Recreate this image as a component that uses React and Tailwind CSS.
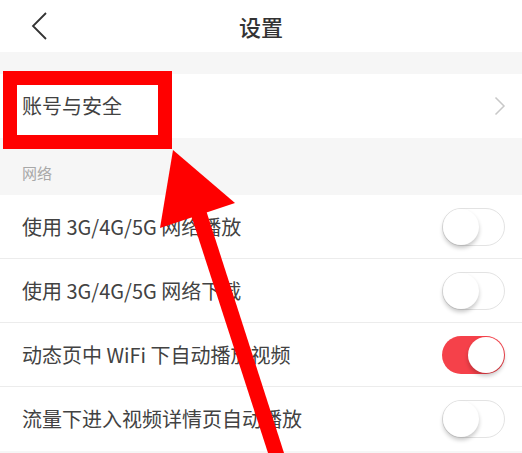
const font = { fontFamily: '"Noto Sans CJK SC", "Noto Sans", sans-serif' };

const Toggle = ({ on }) => {
  return (
    <div
      className={
        on
          ? "w-[63px] h-[38px] rounded-full bg-[#f5414a] flex items-center justify-end p-[1px]"
          : "w-[63px] h-[38px] rounded-full bg-white border border-[#e3e3e3] flex items-center justify-start"
      }
    >
      <div className="w-[36px] h-[36px] rounded-full bg-white shadow-[0_3px_4px_rgba(0,0,0,0.22)]" />
    </div>
  );
};

const SwitchRow = ({ label, on, last }) => {
  return (
    <div
      className={
        last
          ? "h-[64px] flex items-center justify-between pl-[22px] pr-[17px] bg-white"
          : "h-[64px] flex items-center justify-between pl-[22px] pr-[17px] bg-white border-b border-[#ececec]"
      }
    >
      <span className="text-[20px] text-[#424242]">{label}</span>
      <Toggle on={on} />
    </div>
  );
};

const App = () => {
  // network settings
  const rows = [
    { label: "使用 3G/4G/5G 网络播放", on: false },
    { label: "使用 3G/4G/5G 网络下载", on: false },
    { label: "动态页中 WiFi 下自动播放视频", on: true },
    { label: "流量下进入视频详情页自动播放", on: false },
  ];

  return (
    <div className="relative w-[522px] h-[453px] overflow-hidden bg-[#f6f6f6]" style={font}>
      {/* Header */}
      <div className="h-[52px] bg-white flex items-center relative">
        <svg className="ml-[30px]" width="20" height="30" viewBox="0 0 20 30">
          <path d="M16 2 L3 15 L16 28" fill="none" stroke="#333" strokeWidth="1.8" />
        </svg>
        <h1 className="absolute left-0 right-0 text-center text-[22px] font-medium text-[#333]">
          设置
        </h1>
      </div>

      <div className="h-[22px]" />

      {/* Account */}
      <div className="h-[64px] bg-white flex items-center justify-between pl-[22px] pr-[16px]">
        <span className="text-[20px] text-[#424242]">账号与安全</span>
        <svg width="12" height="20" viewBox="0 0 12 20">
          <path d="M1.5 1.5 L10 10 L1.5 18.5" fill="none" stroke="#c8c8c8" strokeWidth="1.5" />
        </svg>
      </div>

      {/* Section title */}
      <div className="h-[57px] flex items-center pl-[22px] pt-[14px]">
        <span className="text-[15px] text-[#a8a8a8]">网络</span>
      </div>

      {rows.map((row, i) => (
        <SwitchRow key={i} label={row.label} on={row.on} last={i === rows.length - 1} />
      ))}

      {/* red annotation */}
      <div className="absolute left-[3px] top-[71px] w-[169px] h-[78px] border-[14px] border-[#ff0000]" />
      <svg className="absolute left-0 top-0" width="522" height="453" viewBox="0 0 522 453">
        <polygon points="173,150 160,228 235,203" fill="#ff0000" />
        <polygon points="190,212 205,207 284,453 268,453" fill="#ff0000" />
      </svg>
    </div>
  );
};

export default App;
